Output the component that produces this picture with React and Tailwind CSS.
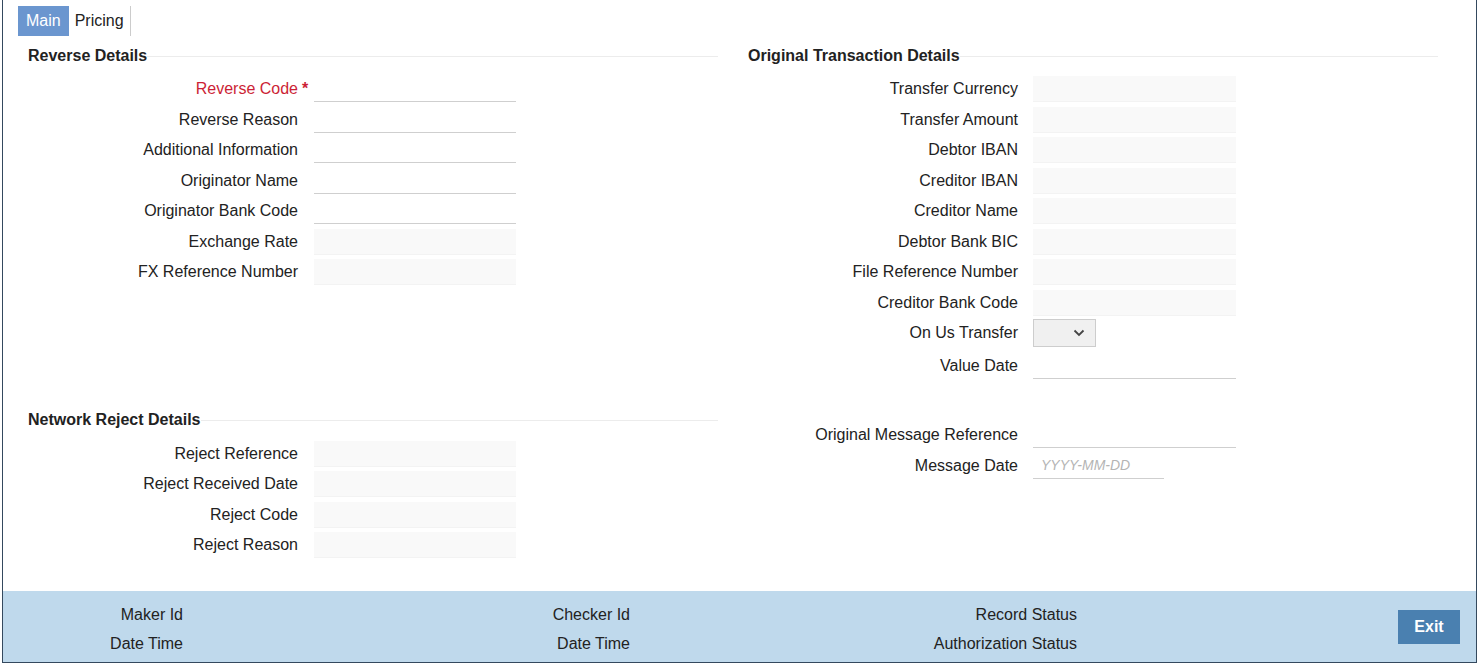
import React from 'react';

const Field = ({ label, readOnly, required, width = 'w-[202px]', gap = 'ml-[16px]', h = 'h-[30.5px]', placeholder }) => (
    <div className={`flex items-center ${h}`}>
        <div className={`w-[270px] text-right relative ${required ? 'text-[#cc1f36]' : ''}`}>
            {label}
            {required && <span className="absolute left-[274px] top-0 font-bold">*</span>}
        </div>
        <div
            className={`${gap} ${width} h-[26px] flex items-center ${
                readOnly ? 'bg-[#f9f9f9] border-b border-[#f3f3f3]' : 'bg-white border-b border-[#cfcfcf]'
            }`}
        >
            {placeholder && <span className="pl-[8px] text-[14px] italic text-[#b4b4b4]">{placeholder}</span>}
        </div>
    </div>
);

const SectionHeader = ({ title, className = '' }) => (
    <div className={`flex items-center h-[22px] ${className}`}>
        <span className="font-bold">{title}</span>
        <div className="flex-1 h-px bg-[#ececec]" />
    </div>
);

const App = () => {
    const reverse = [
        { label: 'Reverse Code', required: true },
        { label: 'Reverse Reason' },
        { label: 'Additional Information' },
        { label: 'Originator Name' },
        { label: 'Originator Bank Code' },
        { label: 'Exchange Rate', readOnly: true },
        { label: 'FX Reference Number', readOnly: true }
    ];
    const reject = ['Reject Reference', 'Reject Received Date', 'Reject Code', 'Reject Reason'];
    const original = [
        'Transfer Currency',
        'Transfer Amount',
        'Debtor IBAN',
        'Creditor IBAN',
        'Creditor Name',
        'Debtor Bank BIC',
        'File Reference Number',
        'Creditor Bank Code'
    ];

    return (
        <div className="w-[1481px] h-[668px] bg-white text-[16px] text-[#222] font-['Liberation_Sans',Arial,sans-serif]">
            <div className="ml-[2px] w-[1475px] h-[663px] border-x border-b border-[#34495e] flex flex-col">
                {/* tabs */}
                <div className="pt-[6px] pl-[15px] flex">
                    <div className="h-[30px] px-[8px] flex items-center bg-[#6b96cf] text-white">Main</div>
                    <div className="h-[30px] px-[6px] flex items-center border-r border-[#cccccc]">Pricing</div>
                </div>

                <div className="flex pl-[25px] mt-[9px]">
                    {/* left column */}
                    <div className="w-[690px]">
                        <SectionHeader title="Reverse Details" />
                        <div className="mt-[6.75px]">
                            {reverse.map((f) => (
                                <Field key={f.label} {...f} />
                            ))}
                        </div>
                        <SectionHeader title="Network Reject Details" className="mt-[121.75px]" />
                        <div className="mt-[7.25px]">
                            {reject.map((l) => (
                                <Field key={l} label={l} readOnly />
                            ))}
                        </div>
                    </div>

                    {/* right column */}
                    <div className="w-[690px] ml-[30px]">
                        <SectionHeader title="Original Transaction Details" />
                        <div className="mt-[6.75px]">
                            {original.map((l) => (
                                <Field key={l} label={l} readOnly gap="ml-[15px]" width="w-[203px]" />
                            ))}
                            <div className="flex items-center h-[30.5px]">
                                <div className="w-[270px] text-right">On Us Transfer</div>
                                <div className="ml-[15px] w-[63px] h-[28px] bg-[#f0f0f0] border border-[#cdcdcd] flex items-center justify-end pr-[10px]">
                                    <svg width="12" height="8" viewBox="0 0 12 8" fill="none">
                                        <path d="M1.5 1.5L6 6L10.5 1.5" stroke="#444" strokeWidth="1.8" />
                                    </svg>
                                </div>
                            </div>
                            <Field label="Value Date" gap="ml-[15px]" width="w-[203px]" h="h-[35px]" />
                            <div className="mt-[36.5px]">
                                <Field label="Original Message Reference" gap="ml-[15px]" width="w-[203px]" />
                                <Field label="Message Date" gap="ml-[15px]" width="w-[131px]" placeholder="YYYY-MM-DD" />
                            </div>
                        </div>
                    </div>
                </div>

                {/* footer */}
                <div className="mt-auto h-[71px] bg-[#bfd9ec] flex items-center">
                    <div className="flex self-start pt-[9px]">
                        <div className="w-[180px] text-right">
                            <div className="h-[29px] leading-[29px]">Maker Id</div>
                            <div className="h-[29px] leading-[29px]">Date Time</div>
                        </div>
                        <div className="w-[447px] text-right">
                            <div className="h-[29px] leading-[29px]">Checker Id</div>
                            <div className="h-[29px] leading-[29px]">Date Time</div>
                        </div>
                        <div className="w-[447px] text-right">
                            <div className="h-[29px] leading-[29px]">Record Status</div>
                            <div className="h-[29px] leading-[29px]">Authorization Status</div>
                        </div>
                    </div>
                    <button className="ml-auto mr-[16px] w-[62px] h-[34px] bg-[#4a80b0] text-white font-bold">
                        Exit
                    </button>
                </div>
            </div>
        </div>
    );
};

export default App;
